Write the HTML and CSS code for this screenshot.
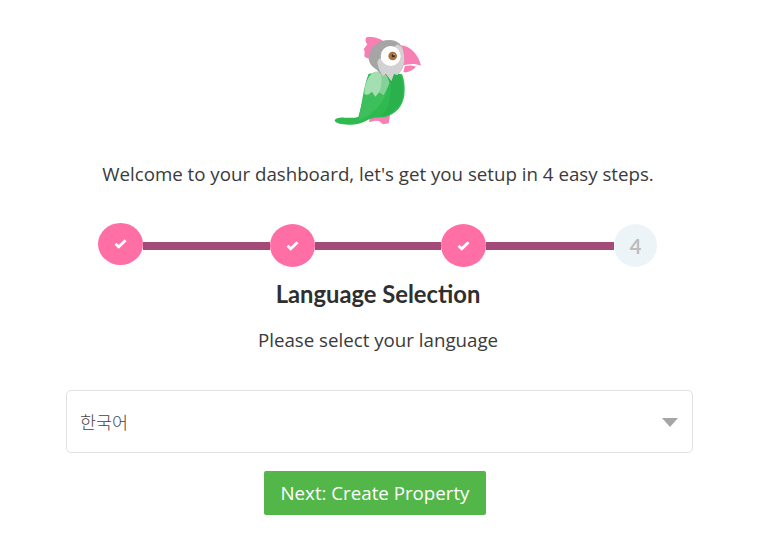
FILE: index.html
```html
<!DOCTYPE html>
<html lang="en">
<head>
<meta charset="utf-8">
<title>Setup</title>
<link rel="stylesheet" href="styles.css">
</head>
<body>
<main class="page">
  <svg class="logo" viewBox="0 0 330 330" width="110" height="110" aria-hidden="true">
    <path fill="#f77fb4" d="M150 280l-3 12 18-5 12 1 12 10 17-3 4-24-28-8z"/>
    <path fill="#f77fb4" d="M139 37c18-4 38 1 52 12l-26 40-11 12c-10 0-18-3-21-7l1-16c-3-2-3-6 0-10l8-10c-4-4-8-12-3-21z"/>
    <path fill="#2fba50" d="M44 287c2-7 14-10 30-9 20 1 32 1 41-3 12-34 14-88 31-129l50-6 50 8c6 14 10 36 7 62-4 34-26 58-58 66l-30 2c-14 2-24 8-36 14-12 6-28 8-44 7-20-1-37-4-41-12z"/>
    <path fill="#2ab04c" d="M183 274c24-22 36-70 26-118l30-8c7 18 12 38 9 62-4 32-30 58-65 64z"/>
    <path fill="#3dc05c" d="M116 284c4-30 14-66 24-94l62 4c-10 36-38 72-78 88z"/>
    <path fill="#a3dfb0" d="M133 208c0-28 10-54 27-66 14-6 30 0 40 12l8 20-8 18-10 18-12-9-12 14-10-15-12 9z"/>
    <path fill="#86d197" d="M183 148c8 2 14 4 17 6l8 20-8 18-10 18-12-9c6-16 8-34 5-53z"/>
    <path fill="#a5a5a5" d="M146 97c2-30 30-52 62-52 26 0 42 16 46 44 2 20-4 40-14 52l-8 9-10-4-8 22-16-22-10 8-18-20c-14-8-25-21-24-37z"/>
    <path fill="#d2d2d2" d="M172 110c2-6 6-10 12-12l48-40c14 6 22 18 22 33 0 22-6 40-16 52l-6 7-10-4-8 22-16-22-10 8-10-20c-3-10-6-16-6-24z"/>
    <circle cx="212" cy="93" r="30" fill="#fff"/>
    <circle cx="218" cy="93" r="13" fill="#a9733f"/>
    <circle cx="220" cy="92" r="5" fill="#3a2a1c"/>
    <circle cx="222" cy="89" r="2" fill="#fff"/>
    <path fill="#f77fb4" d="M244 61c28 3 52 29 59 61-12-5-28-7-44-3l-7 1c2-20 0-42-8-59z"/>
    <path fill="#f77fb4" d="M254 124c10-3 24-3 34 1-8 10-22 17-36 17-2 0-2-2-1-4z"/>
  </svg>
  <p class="intro">Welcome to your dashboard, let's get you setup in 4 easy steps.</p>
  <div class="stepper">
    <span class="step step-done step-first"><svg viewBox="0 0 14 12" width="13" height="11"><path d="M1.5 6.2l3.6 3.4L12.5 2.4" fill="none" stroke="#fff" stroke-width="3"/></svg></span>
    <span class="bar bar-one"></span>
    <span class="step step-done"><svg viewBox="0 0 14 12" width="13" height="11"><path d="M1.5 6.2l3.6 3.4L12.5 2.4" fill="none" stroke="#fff" stroke-width="3"/></svg></span>
    <span class="bar bar-two"></span>
    <span class="step step-done"><svg viewBox="0 0 14 12" width="13" height="11"><path d="M1.5 6.2l3.6 3.4L12.5 2.4" fill="none" stroke="#fff" stroke-width="3"/></svg></span>
    <span class="bar bar-three"></span>
    <span class="step step-todo">4</span>
  </div>
  <h1 class="title">Language Selection</h1>
  <p class="subtitle">Please select your language</p>
  <div class="select">
    <span class="select-value">한국어</span>
    <span class="select-arrow"></span>
  </div>
  <a class="next" href="#">Next: Create Property</a>
</main>
</body>
</html>
```
FILE: styles.css
```css
* { box-sizing: border-box; }
html, body { margin: 0; background: #fff; }
.page {
  width: 765px;
  height: 549px;
  overflow: hidden;
  padding-top: 25px;
  font-family: "Open Sans", sans-serif;
  color: #3a3a3a;
  display: flex;
  flex-direction: column;
}
.logo { display: block; margin-left: 320px; flex: none; }
.intro {
  margin: 27px 0 0;
  width: 756px;
  text-align: center;
  font-size: 18.72px;
  line-height: 24px;
}
.stepper {
  display: flex;
  align-items: center;
  margin: 38px 0 0 98px;
  width: 559px;
  height: 43px;
}
.step {
  flex: none;
  height: 43px;
  border-radius: 50%;
  display: flex;
  align-items: center;
  justify-content: center;
}
.step-done { width: 45px; background: #ff6fa6; }
.step-first { height: 42px; margin-top: -4px; }
.step-todo {
  width: 43px;
  background: #edf4f8;
  color: #bdbdbd;
  font-family: Lato, sans-serif;
  font-weight: 700;
  font-size: 20px;
}
.bar { flex: none; height: 8px; background: #a44a78; }
.bar-one { width: 127px; }
.bar-two { width: 126px; }
.bar-three { width: 128px; }
.title {
  margin: 9px 0 0;
  width: 756px;
  text-align: center;
  font-family: Lato, sans-serif;
  font-size: 23.76px;
  line-height: 36px;
  font-weight: 700;
  color: #2f2f2f;
}
.subtitle {
  margin: 16px 0 0;
  width: 756px;
  text-align: center;
  font-size: 18.72px;
  line-height: 24px;
}
.select {
  margin: 38px 0 0 66px;
  width: 627px;
  height: 63px;
  border: 1px solid #e2e2e2;
  border-radius: 5px;
  padding: 0 14px 0 13px;
  display: flex;
  align-items: center;
  justify-content: space-between;
}
.select-value {
  font-family: "Noto Sans CJK KR", sans-serif;
  font-size: 17.4px;
  font-weight: 300;
  color: #444;
}
.select-arrow {
  width: 0;
  height: 0;
  border-left: 8px solid transparent;
  border-right: 8px solid transparent;
  border-top: 9px solid #a6a6a6;
  margin-top: 1px;
}
.next {
  margin: 18px 0 0 264px;
  width: 222px;
  height: 44px;
  background: #53b649;
  border-radius: 2px;
  color: #fff;
  font-size: 18.72px;
  line-height: 44px;
  text-align: center;
  text-decoration: none;
}
```
